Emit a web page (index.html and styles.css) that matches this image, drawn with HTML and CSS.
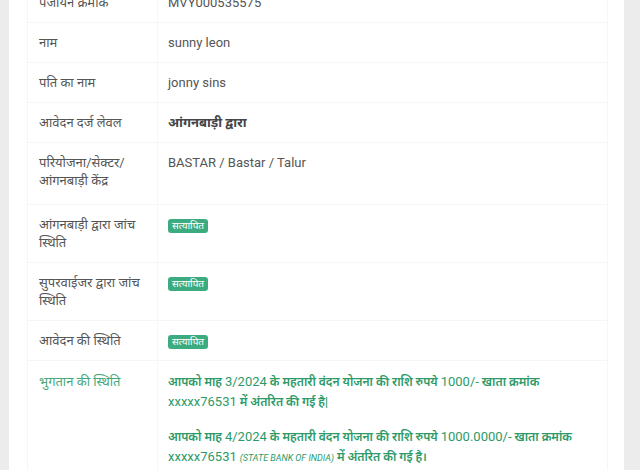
FILE: index.html
```html
<!DOCTYPE html>
<html lang="hi">
<head>
    <meta charset="UTF-8">
    <meta name="viewport" content="width=device-width, initial-scale=1.0">
    <title>आवेदन की जानकारी</title>
    <link rel="stylesheet" href="styles.css">
</head>
<body>
    <div class="card">
        <table class="info-table">
            <tr>
                <td class="label">पंजीयन क्रमांक</td>
                <td>MVY000535575</td>
            </tr>
            <tr>
                <td class="label">नाम</td>
                <td>sunny leon</td>
            </tr>
            <tr>
                <td class="label">पति का नाम</td>
                <td>jonny sins</td>
            </tr>
            <tr>
                <td class="label">आवेदन दर्ज लेवल</td>
                <td class="strong">आंगनबाड़ी द्वारा</td>
            </tr>
            <tr class="tall">
                <td class="label">परियोजना/सेक्टर/ आंगनबाड़ी केंद्र</td>
                <td>BASTAR / Bastar / Talur</td>
            </tr>
            <tr>
                <td class="label">आंगनबाड़ी द्वारा जांच स्थिति</td>
                <td><span class="badge">सत्यापित</span></td>
            </tr>
            <tr>
                <td class="label">सुपरवाईजर द्वारा जांच स्थिति</td>
                <td><span class="badge">सत्यापित</span></td>
            </tr>
            <tr>
                <td class="label">आवेदन की स्थिति</td>
                <td><span class="badge">सत्यापित</span></td>
            </tr>
            <tr class="payment">
                <td class="label">भुगतान की स्थिति</td>
                <td>
                    <p>आपको माह <span class="plain">3/2024</span> के महतारी वंदन योजना की राशि रुपये <span class="plain">1000/-</span> खाता क्रमांक <span class="plain">xxxxx76531</span> में अंतरित की गई है|</p>
                    <p>आपको माह <span class="plain">4/2024</span> के महतारी वंदन योजना की राशि रुपये <span class="plain">1000.0000/-</span> खाता क्रमांक <span class="plain">xxxxx76531</span> <span class="bank">(STATE BANK OF INDIA)</span> में अंतरित की गई है।</p>
                </td>
            </tr>
        </table>
    </div>
</body>
</html>
```

FILE: styles.css
```css
body {
    margin: 0;
    background-color: #ececec;
    font-family: Roboto, "Noto Sans", "Noto Sans Devanagari", sans-serif;
    font-size: 13px;
    color: #555;
}
.card {
    background-color: #fff;
    margin: -18px 16px 0 9px;
    padding: 0 16px 20px 18px;
}
.info-table {
    width: 100%;
    border-collapse: collapse;
}
.info-table td {
    border: 1px solid #f6f6f6;
    padding: 11px 10px 10px;
    line-height: 18px;
    vertical-align: top;
    text-align: left;
}
.info-table td.label {
    width: 108px;
    padding-left: 11px;
}
.info-table .tall td {
    padding-bottom: 14px;
}
.strong {
    font-weight: bold;
    color: #444;
}
.badge {
    display: inline-block;
    background-color: #3dab80;
    color: #fff;
    font-size: 10px;
    line-height: 14px;
    padding: 0 4px;
    border-radius: 3px;
}
.payment td {
    line-height: 20px;
}
.payment td.label {
    color: #45a77a;
}
.payment p {
    margin: 0 0 15px;
    color: #2c9a68;
    font-size: 12px;
    font-weight: 600;
}
.payment p:last-child {
    margin-bottom: 0;
}
.plain {
    font-weight: normal;
    font-size: 13px;
}
.bank {
    font-weight: normal;
    font-style: italic;
    font-size: 9px;
}
```
